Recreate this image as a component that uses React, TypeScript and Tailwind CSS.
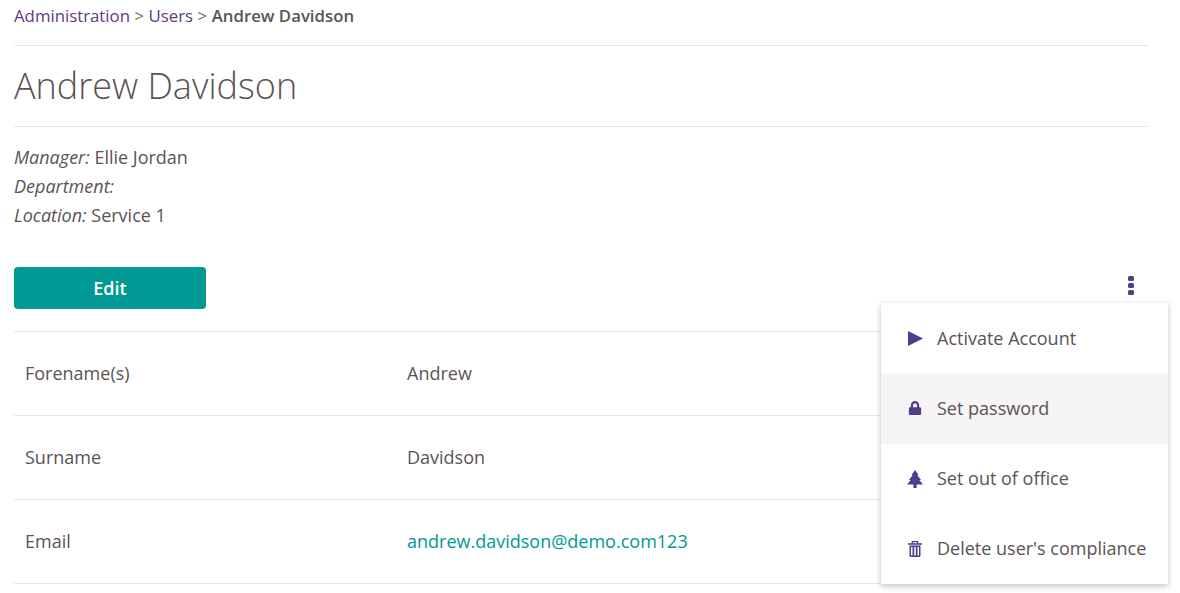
import { FaLock } from 'react-icons/fa';

const rows = [
  { label: 'Forename(s)', value: 'Andrew' },
  { label: 'Surname', value: 'Davidson' },
  { label: 'Email', value: 'andrew.davidson@demo.com123', link: true },
];

const PlayIcon = () => (
  <svg width="15" height="15" viewBox="0 0 15 15" fill="currentColor">
    <polygon points="0,0 15,7.5 0,15" />
  </svg>
);

const TreeIcon = () => (
  <svg width="16" height="18" viewBox="0 0 16 18" fill="currentColor">
    <polygon points="8,0 11.5,5 10.3,5 14,10 12.3,10 16,14.5 9.6,14.5 9.6,18 6.4,18 6.4,14.5 0,14.5 3.7,10 2,10 5.7,5 4.5,5" />
  </svg>
);

const TrashIcon = () => (
  <svg width="14" height="16" viewBox="0 0 14 16" fill="currentColor">
    <path d="M4.6 0h4.8a1 1 0 0 1 1 1v1.2H14v1.6H0V2.2h3.6V1a1 1 0 0 1 1-1zM4.9 1.2v1h4.2v-1z" fillRule="evenodd" />
    <path d="M1.5 4.6h11V14.4a1.6 1.6 0 0 1-1.6 1.6H3.1a1.6 1.6 0 0 1-1.6-1.6zM3 6v8.6h1.5V6zM6.2 6v8.6h1.6V6zM9.5 6v8.6H11V6z" fillRule="evenodd" />
  </svg>
);

const KebabIcon = () => (
  <svg width="6" height="19" viewBox="0 0 6 19" fill="currentColor">
    <rect x="0" y="0" width="6" height="5" rx="1.5" />
    <rect x="0" y="7" width="6" height="5" rx="1.5" />
    <rect x="0" y="14" width="6" height="5" rx="1.5" />
  </svg>
);

const menuItems = [
  { label: 'Activate Account', icon: <PlayIcon /> },
  { label: 'Set password', icon: <FaLock size={14} />, active: true },
  { label: 'Set out of office', icon: <TreeIcon /> },
  { label: "Delete user's compliance", icon: <TrashIcon /> },
];

const App = () => {
  return (
    <div className="h-[593px] w-[1180px] overflow-hidden bg-white font-['Open_Sans',sans-serif] text-[#5b5354]">
      <div className="ml-[14px] w-[1135px]">
        {/* Breadcrumb */}
        <div className="flex h-[46px] items-start border-b border-[#e8e8e8] pt-[4px] text-[16.8px] leading-[24px]">
          <a className="text-[#5f3a84]">Administration</a>
          <span className="mx-[4.5px] text-[#6e6768]">&gt;</span>
          <a className="text-[#5f3a84]">Users</a>
          <span className="mx-[4.5px] text-[#6e6768]">&gt;</span>
          <span className="font-semibold">Andrew Davidson</span>
        </div>

        {/* Title */}
        <h1 className="flex h-[81px] items-center border-b border-[#e8e8e8] text-[36px] font-light">
          Andrew Davidson
        </h1>

        {/* Details */}
        <div className="pt-[16px] text-[18px] leading-[29px]">
          <div><em>Manager:</em> Ellie Jordan</div>
          <div><em>Department:</em></div>
          <div><em>Location:</em> Service 1</div>
        </div>

        {/* Actions */}
        <div className="mt-[37px] flex items-start justify-between">
          <button className="h-[42px] w-[192px] rounded-[4px] bg-[#009994] text-[18px] font-semibold text-white">
            Edit
          </button>
          <button className="mr-[15px] mt-[9px] text-[#4e3d8f]">
            <KebabIcon />
          </button>
        </div>

        {/* User fields */}
        <div className="mt-[22px] border-t border-[#e8e8e8]">
          {rows.map(row => (
            <div key={row.label} className="flex h-[84px] items-center border-b border-[#e8e8e8] text-[18px]">
              <div className="w-[393px] pl-[11px]">{row.label}</div>
              <div className={row.link ? 'text-[#009994]' : ''}>{row.value}</div>
            </div>
          ))}
        </div>
      </div>

      {/* Dropdown menu */}
      <div className="absolute left-[881px] top-[303px] w-[287px] bg-white shadow-[0_2px_6px_rgba(0,0,0,0.25)]">
        {menuItems.map(item => (
          <div
            key={item.label}
            className={`flex h-[70.25px] items-center text-[18px] ${item.active ? 'bg-[#f6f4f5]' : ''}`}
          >
            <span className="flex w-[56px] justify-center pl-[26px] pr-[14px] text-[#4e3d8f]">{item.icon}</span>
            <span>{item.label}</span>
          </div>
        ))}
      </div>
    </div>
  );
};

export default App;
